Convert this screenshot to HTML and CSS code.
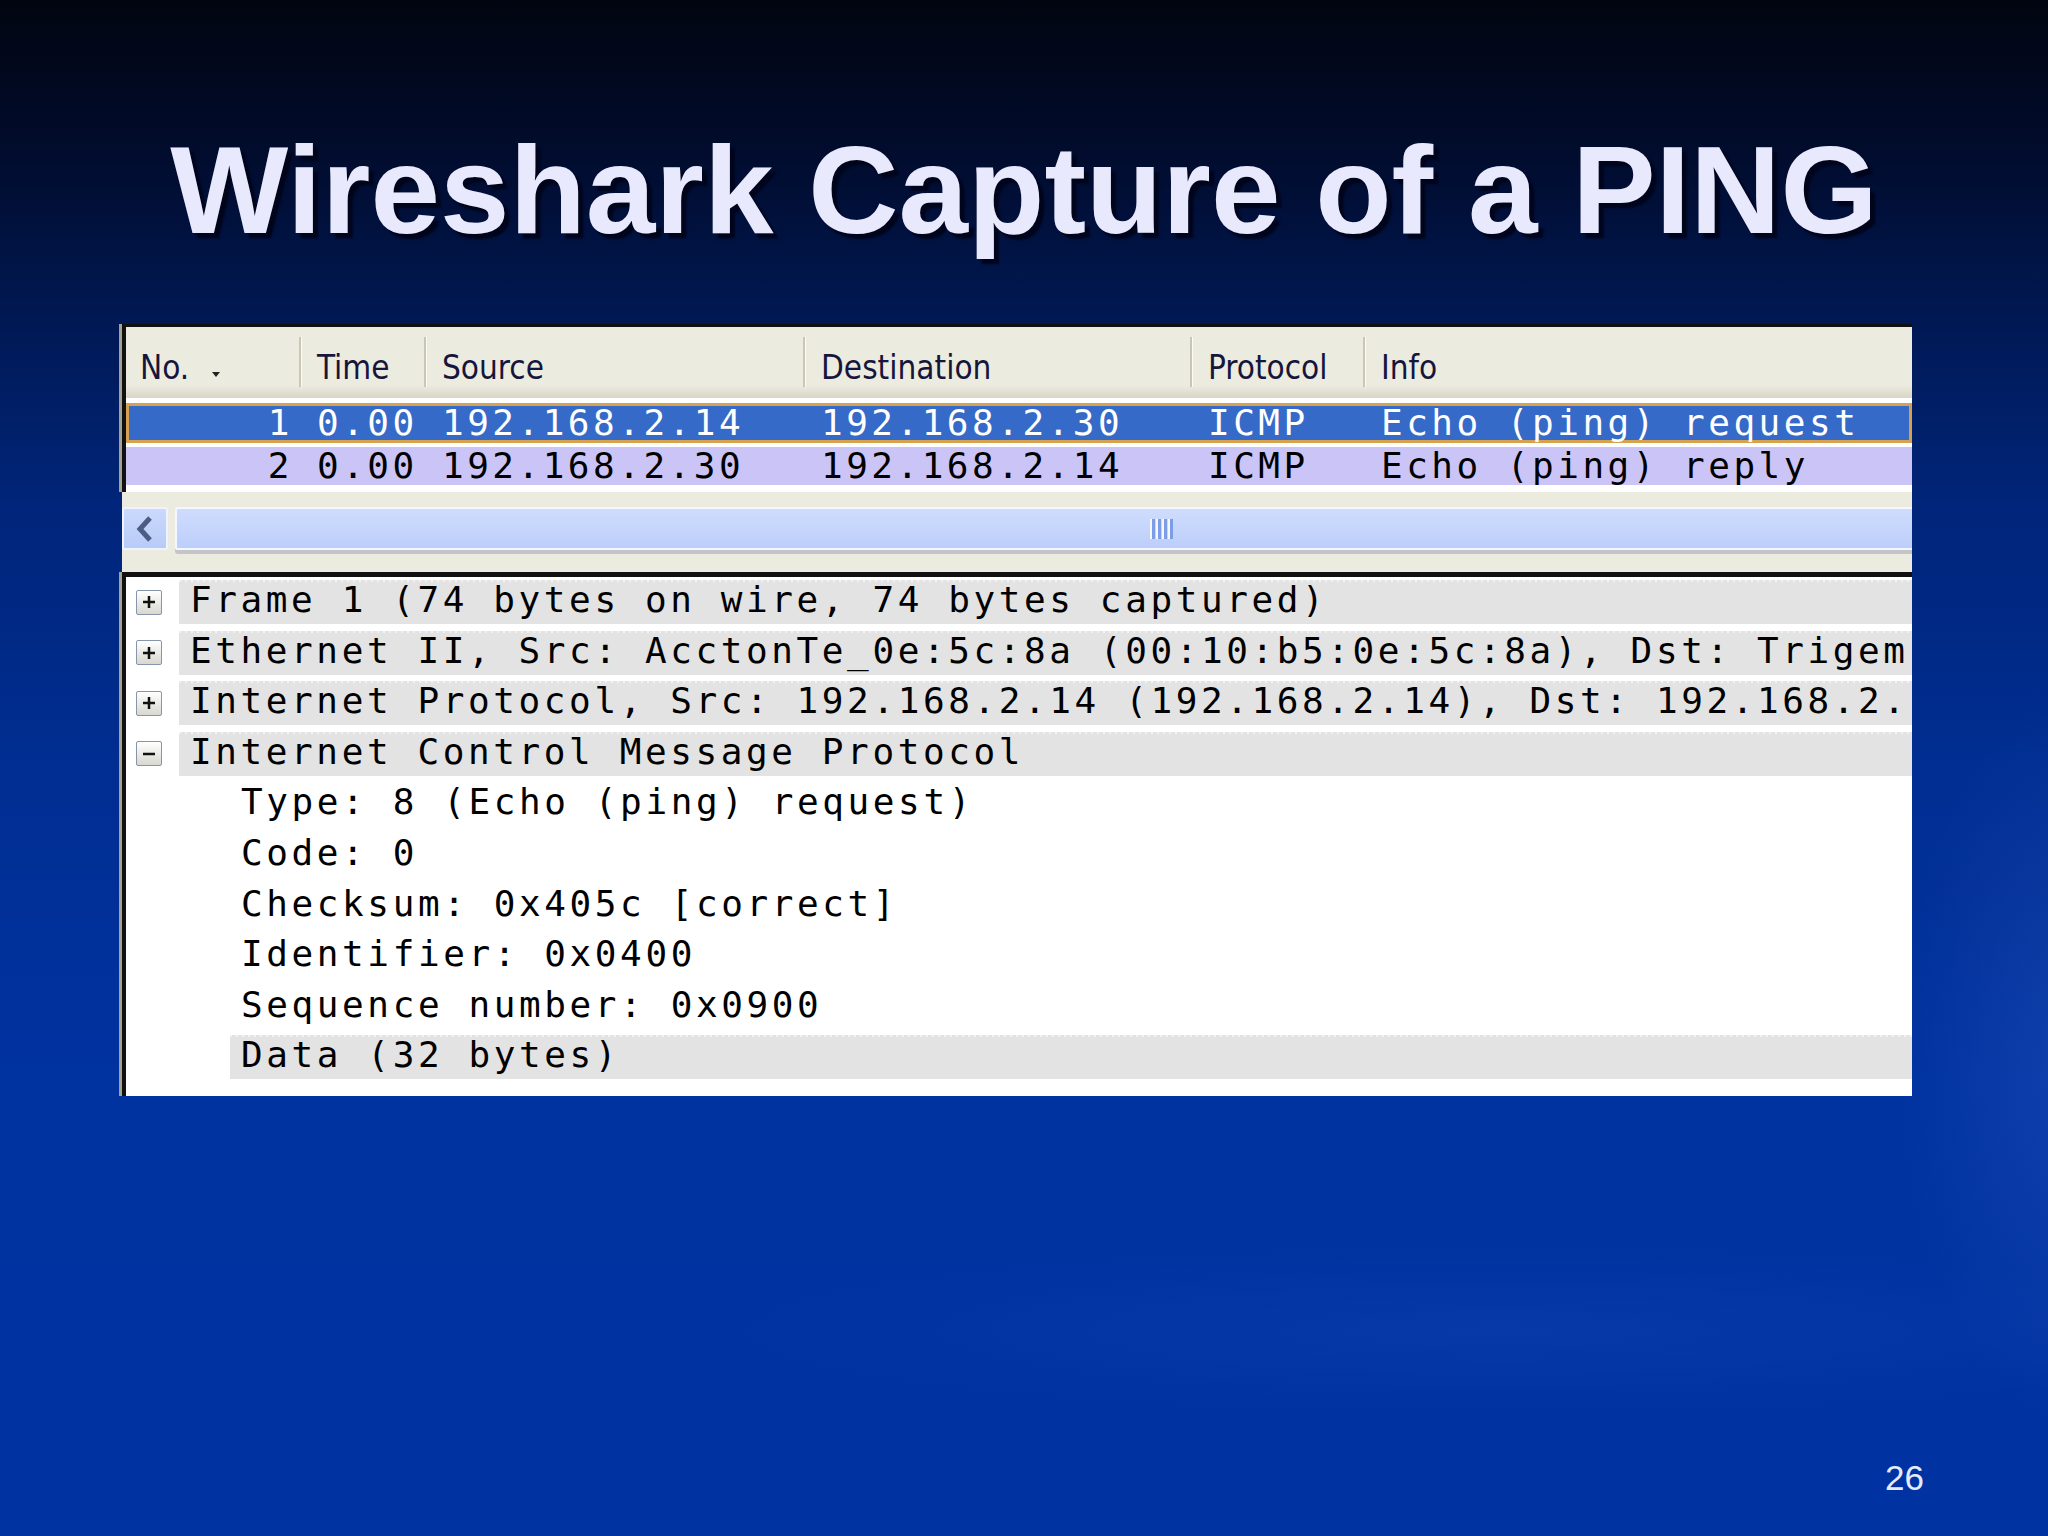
FILE: index.html
```html
<!DOCTYPE html>
<html lang="en">
<head>
    <meta charset="UTF-8">
    <meta name="viewport" content="width=device-width, initial-scale=1.0">
    <title>Wireshark Capture of a PING</title>
    <link rel="stylesheet" href="styles.css">
</head>
<body>
    <div class="slide">
        <h1 class="title">Wireshark Capture of a PING</h1>

        <div class="capture">
            <div class="packets">
                <div class="cols head">
                    <div class="hc first">No.<span class="sort"></span></div>
                    <div class="hc">Time</div>
                    <div class="hc">Source</div>
                    <div class="hc">Destination</div>
                    <div class="hc">Protocol</div>
                    <div class="hc">Info</div>
                </div>
                <div class="rows">
                    <div class="cols pkt sel">
                        <span class="num">1</span>
                        <span>0.00</span>
                        <span>192.168.2.14</span>
                        <span>192.168.2.30</span>
                        <span>ICMP</span>
                        <span>Echo (ping) request</span>
                    </div>
                    <div class="cols pkt alt">
                        <span class="num">2</span>
                        <span>0.00</span>
                        <span>192.168.2.30</span>
                        <span>192.168.2.14</span>
                        <span>ICMP</span>
                        <span>Echo (ping) reply</span>
                    </div>
                </div>
            </div>

            <div class="hscroll">
                <div class="sb-btn">
                    <svg width="22" height="28" viewBox="0 0 22 28"><path d="M16 3 L6 14 L16 25" stroke="#4b5d84" stroke-width="5" fill="none"/></svg>
                </div>
                <div class="sb-thumb"><span class="grip"></span></div>
            </div>

            <div class="tree">
                <div class="node">
                    <span class="toggle"><svg width="16" height="16" viewBox="0 0 16 16"><path d="M2 8h12M8 2v12" stroke="#111" stroke-width="2.5"/></svg></span>
                    <span class="label">Frame 1 (74 bytes on wire, 74 bytes captured)</span>
                </div>
                <div class="node">
                    <span class="toggle"><svg width="16" height="16" viewBox="0 0 16 16"><path d="M2 8h12M8 2v12" stroke="#111" stroke-width="2.5"/></svg></span>
                    <span class="label">Ethernet II, Src: AcctonTe_0e:5c:8a (00:10:b5:0e:5c:8a), Dst: Trigem</span>
                </div>
                <div class="node">
                    <span class="toggle"><svg width="16" height="16" viewBox="0 0 16 16"><path d="M2 8h12M8 2v12" stroke="#111" stroke-width="2.5"/></svg></span>
                    <span class="label">Internet Protocol, Src: 192.168.2.14 (192.168.2.14), Dst: 192.168.2.</span>
                </div>
                <div class="node">
                    <span class="toggle"><svg width="16" height="16" viewBox="0 0 16 16"><path d="M2 8h12" stroke="#111" stroke-width="2.5"/></svg></span>
                    <span class="label">Internet Control Message Protocol</span>
                </div>
                <div class="node child"><span class="label bare">Type: 8 (Echo (ping) request)</span></div>
                <div class="node child"><span class="label bare">Code: 0</span></div>
                <div class="node child"><span class="label bare">Checksum: 0x405c [correct]</span></div>
                <div class="node child"><span class="label bare">Identifier: 0x0400</span></div>
                <div class="node child"><span class="label bare">Sequence number: 0x0900</span></div>
                <div class="node child"><span class="label">Data (32 bytes)</span></div>
            </div>
        </div>

        <div class="page-num">26</div>
    </div>
</body>
</html>
```

FILE: styles.css
```css
body {
    margin: 0;
    padding: 0;
    font-family: "Liberation Sans", Arial, sans-serif;
}

.slide {
    width: 2048px;
    height: 1536px;
    display: flex;
    flex-direction: column;
    overflow: hidden;
    background:
        radial-gradient(ellipse 260px 520px at 2080px 1060px, rgba(90, 130, 230, 0.18), transparent 70%),
        radial-gradient(ellipse 1100px 120px at 1500px 1330px, rgba(70, 110, 220, 0.10), transparent 70%),
        linear-gradient(180deg, #010510 0%, #010e34 12%, #001a58 22%, #00257a 33%, #002e92 50%, #0032a0 70%, #0033a2 100%);
}

.title {
    margin: 0;
    padding-top: 127px;
    line-height: 125px;
    font-size: 125px;
    font-weight: bold;
    text-align: center;
    color: #e8e9fc;
    text-shadow: 5px 5px 2px #00051c;
}

.capture {
    margin: 72px 0 0 119px;
    width: 1793px;
    overflow: hidden;
}

/* packet list */
.packets {
    margin-left: 3px;
    border-top: 3px solid #111;
    border-left: 4px solid #111;
    box-shadow: -3px 0 0 #a3a295;
}

.cols {
    display: grid;
    grid-template-columns: 173px 125px 379px 387px 173px 1fr;
}

.head {
    height: 71px;
    box-sizing: border-box;
    padding-top: 10px;
    align-items: start;
    background: linear-gradient(180deg, #ecebdf 0%, #ecebdf 82%, #d9d6c7 100%);
    font-family: "DejaVu Sans Condensed", "DejaVu Sans", sans-serif;
    font-stretch: condensed;
    font-size: 33px;
    color: #16163c;
}

.hc {
    height: 50px;
    box-sizing: border-box;
    padding: 9px 0 0 16px;
    line-height: 44px;
    border-left: 2px solid #c9c6b5;
    box-shadow: inset 1px 0 0 #fbfbf6;
    white-space: nowrap;
}

.hc.first {
    border-left: none;
    box-shadow: none;
    padding-left: 14px;
}

.sort {
    display: inline-block;
    margin-left: 23px;
    width: 0;
    height: 0;
    border-left: 4px solid transparent;
    border-right: 4px solid transparent;
    border-top: 5px solid #222;
    vertical-align: 2px;
}

.rows {
    background: #fff;
    padding: 5px 0 7px;
    font-family: "DejaVu Sans Mono", monospace;
    font-size: 36px;
    letter-spacing: 3.5px;
}

.pkt span {
    padding-left: 18px;
    white-space: pre;
}

.pkt span.num {
    text-align: right;
    padding: 0 6px 0 0;
}

.sel {
    height: 40px;
    line-height: 39px;
    background: #356ac8;
    box-shadow: inset 0 0 0 3px #d6a24f;
    color: #fff;
}

.alt {
    height: 38px;
    line-height: 37px;
    margin-top: 4px;
    background: #cbc5f7;
    color: #000;
}

/* horizontal scrollbar */
.hscroll {
    margin-left: 3px;
    background: #ecebdf;
    padding: 15px 0 22px;
    display: flex;
    gap: 7px;
}

.sb-btn {
    width: 46px;
    height: 43px;
    box-sizing: border-box;
    border: 2px solid #eef3ff;
    border-radius: 3px;
    background: linear-gradient(180deg, #cad9fd, #b8cbf7);
    display: flex;
    align-items: center;
    justify-content: center;
}

.sb-thumb {
    flex: 1;
    height: 43px;
    box-sizing: border-box;
    border: 2px solid #f4f7ff;
    border-right: none;
    border-radius: 3px 0 0 3px;
    background: linear-gradient(180deg, #cfdcfd, #bccefa);
    box-shadow: 0 4px 0 #c3c5c9;
    display: flex;
    align-items: center;
}

.grip {
    margin-left: 973px;
    width: 24px;
    height: 20px;
    background: repeating-linear-gradient(90deg, #f6f8ff 0, #f6f8ff 2px, #7d9de6 2px, #7d9de6 5px, transparent 5px, transparent 6px);
}

/* packet details */
.tree {
    margin-left: 3px;
    border-top: 5px solid #111;
    border-left: 4px solid #111;
    box-shadow: -3px 0 0 #a3a295;
    background: #fff;
    padding: 3px 0 17px;
    display: flex;
    flex-direction: column;
    gap: 6.6px;
    font-family: "DejaVu Sans Mono", monospace;
    font-size: 36px;
    letter-spacing: 3.6px;
    color: #000;
}

.node {
    display: flex;
    align-items: center;
    height: 44px;
}

.toggle {
    width: 26px;
    height: 25px;
    box-sizing: border-box;
    margin: 0 17px 0 10px;
    border: 1px solid #8795ab;
    border-radius: 2px;
    background: linear-gradient(180deg, #ffffff, #d8d8d0);
    display: flex;
    align-items: center;
    justify-content: center;
}

.label {
    flex: 1;
    height: 44px;
    line-height: 40px;
    padding-left: 11px;
    background:
        repeating-linear-gradient(90deg, #f2f2f2 0, #f2f2f2 2px, transparent 2px, transparent 6px) top / 100% 2px no-repeat,
        #e3e3e3;
    box-sizing: border-box;
    white-space: pre;
    overflow: hidden;
}

.child .label {
    margin-left: 104px;
}

.label.bare {
    background: transparent;
}

.page-num {
    margin-top: auto;
    padding: 0 124px 38px 0;
    text-align: right;
    font-size: 35px;
    line-height: 40px;
    color: #e6ecff;
}
```
